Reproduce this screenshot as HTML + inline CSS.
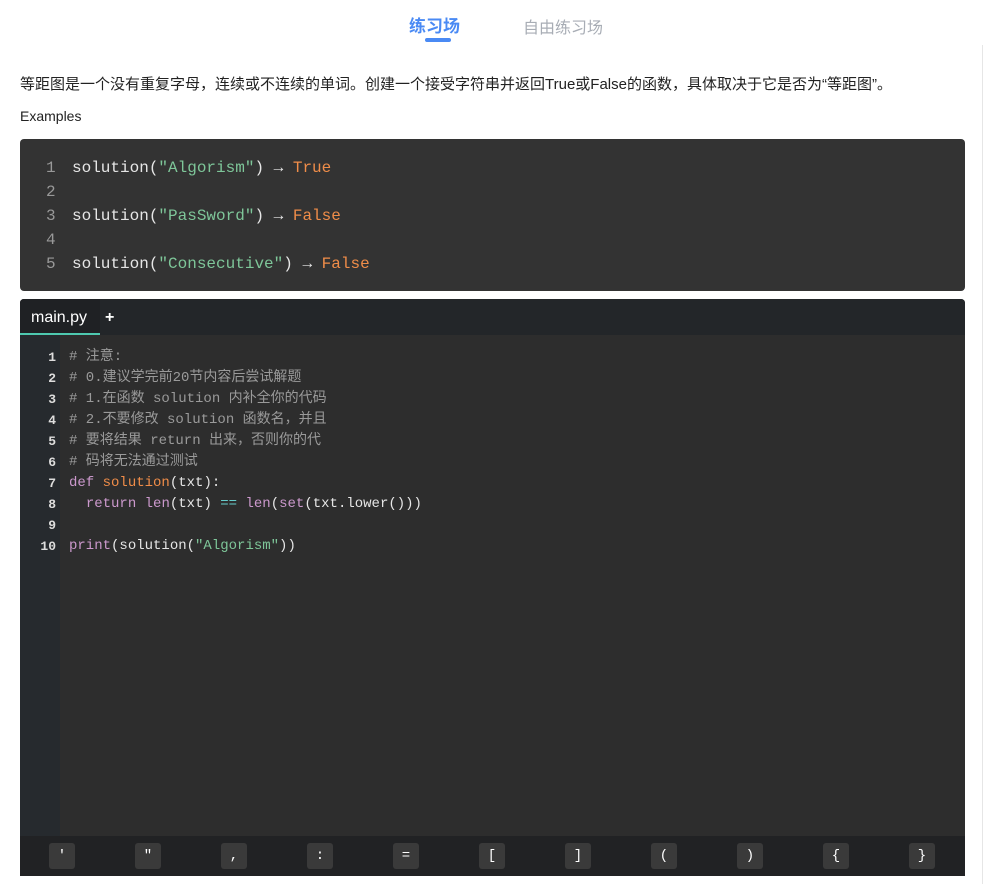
<!DOCTYPE html>
<html><head><meta charset="utf-8"><style>
*{margin:0;padding:0;box-sizing:border-box}
body{width:986px;height:884px;background:#fff;font-family:"Liberation Sans","Noto Sans CJK SC",sans-serif;position:relative;overflow:hidden}
.tab{position:absolute;top:12px;font-size:17px;font-weight:bold}
.mono{font-family:"Liberation Mono","Noto Sans CJK SC",monospace}
.ex{position:absolute;left:20px;top:139px;width:945px;height:152px;background:#333;border-radius:4px}
.exl{position:absolute;left:0;font-size:16px;line-height:24px;white-space:pre;color:#e6e6e6}
.ed{position:absolute;left:20px;top:299px;width:945px;height:577px;background:#2d2d2d;border-radius:4px 4px 0 0;overflow:hidden}
.bar{position:absolute;left:0;top:0;width:945px;height:36px;background:#232629}
.gut{position:absolute;left:0;top:36px;width:40px;height:501px;background:#262a2e}
.cl{position:absolute;font-size:14px;line-height:21px;white-space:pre;color:#e6e6e6}
.ln{position:absolute;width:36px;text-align:right;font-size:13px;line-height:21px;color:#ddd;font-family:"Liberation Mono",monospace;font-weight:bold}
.keys{position:absolute;left:0;top:537px;width:945px;height:40px;background:#212224}
.k{position:absolute;top:7px;width:26px;height:26px;background:#3a3a3a;border-radius:3px;color:#fff;font-family:"Liberation Mono",monospace;font-size:14px;text-align:center;line-height:26px}
.c{color:#9a9a9a}.s{color:#7ec699}.o{color:#f08d49}.p{color:#cc99cd}.g{color:#67cdcc}
</style></head><body>
<div class="tab" style="left:409px;color:#4a8af4">练习场</div>
<div style="position:absolute;left:425px;top:38px;width:26px;height:4px;background:#4a8af4;border-radius:2px"></div>
<div class="tab" style="left:523px;color:#a8adb5;font-weight:normal;font-size:16px;top:14px">自由练习场</div>
<div style="position:absolute;right:0;top:45px;width:4px;height:839px;border-left:1px solid #e6e6e6"></div>
<div style="position:absolute;left:20px;top:73px;font-size:15px;color:#222;white-space:nowrap">等距图是一个没有重复字母，连续或不连续的单词。创建一个接受字符串并返回True或False的函数，具体取决于它是否为“等距图”。</div>
<div style="position:absolute;left:20px;top:108px;font-size:14px;color:#222">Examples</div>
<div class="ex">
<div class="exl mono" style="top:17px;left:26px;color:#999">1
2
3
4
5</div>
<div class="exl mono" style="top:17px;left:52px">solution(<span class="s">"Algorism"</span>) → <span class="o">True</span>

solution(<span class="s">"PasSword"</span>) → <span class="o">False</span>

solution(<span class="s">"Consecutive"</span>) → <span class="o">False</span></div>
</div>
<div class="ed">
<div class="bar"><div style="position:absolute;left:0;top:0;width:80px;height:36px;background:#1f2124;border-bottom:2px solid #4ec9b0;color:#fff;font-size:16px;line-height:38px;padding-left:11px">main.py</div><div style="position:absolute;left:85px;top:10px;color:#fff;font-size:16px;font-weight:bold">+</div></div>
<div class="gut"></div>
<div class="ln" style="left:0;top:48px;white-space:pre">1
2
3
4
5
6
7
8
9
10</div>
<div class="cl mono" style="left:49px;top:48px"><span class="c"># 注意:
# 0.建议学完前20节内容后尝试解题
# 1.在函数 solution 内补全你的代码
# 2.不要修改 solution 函数名，并且
# 要将结果 return 出来，否则你的代
# 码将无法通过测试</span>
<span class="p">def</span> <span class="o">solution</span>(txt):
  <span class="p">return</span> <span class="p">len</span>(txt) <span class="g">==</span> <span class="p">len</span>(<span class="p">set</span>(txt.lower()))

<span class="p">print</span>(solution(<span class="s">"Algorism"</span>))</div>
<div class="keys">
<div class="k" style="left:29px">'</div><div class="k" style="left:115px">"</div><div class="k" style="left:201px">,</div><div class="k" style="left:287px">:</div><div class="k" style="left:373px">=</div><div class="k" style="left:459px">[</div><div class="k" style="left:545px">]</div><div class="k" style="left:631px">(</div><div class="k" style="left:717px">)</div><div class="k" style="left:803px">{</div><div class="k" style="left:889px">}</div>
</div>
</div>
</body></html>
